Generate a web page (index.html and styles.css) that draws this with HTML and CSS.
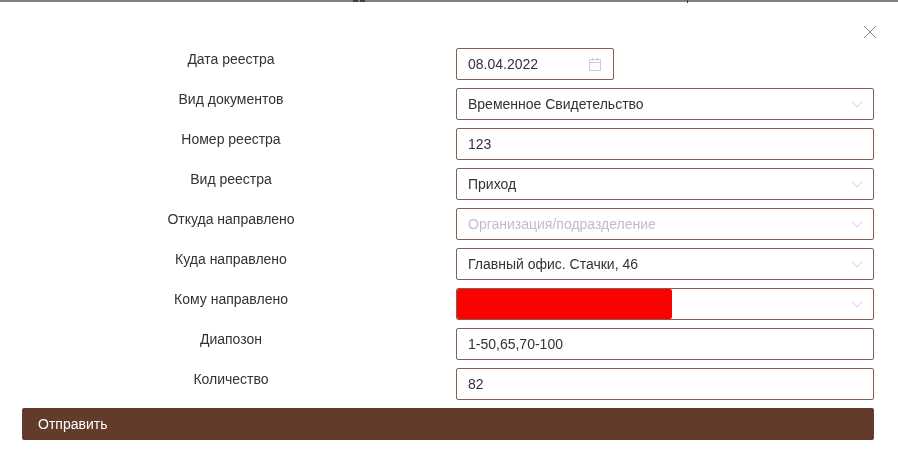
FILE: index.html
```html
<!DOCTYPE html>
<html>
<head>
  <title>Реестр</title>
  <meta name="viewport" content="width=device-width, initial-scale=1">
  <link rel="stylesheet" href="styles.css">
</head>
<body>

  <div class="top-line">
    <span class="mark mark-one"></span>
    <span class="mark mark-two"></span>
    <span class="mark mark-three"></span>
  </div>

  <div class="modal">
    <button class="close-button">
      <svg width="14" height="14" viewBox="0 0 14 14">
        <path d="M1 1L13 13M13 1L1 13" stroke="#8c8c8c" stroke-width="1" fill="none"/>
      </svg>
    </button>

    <form class="form">
      <div class="row">
        <label class="label">Дата реестра</label>
        <div class="field field-date">
          <span class="value">08.04.2022</span>
          <svg class="icon" width="14" height="14" viewBox="0 0 14 14">
            <path d="M1.5 2.5H12.5V13.5H1.5ZM1.5 5.5H12.5M4.5 1V3.5M9.5 1V3.5" stroke="#cccccc" stroke-width="1" fill="none"/>
          </svg>
        </div>
      </div>

      <div class="row">
        <label class="label">Вид документов</label>
        <div class="field field-select">
          <span class="value">Временное Свидетельство</span>
          <svg class="icon" width="12" height="8" viewBox="0 0 12 8">
            <path d="M1 1.5L6 7L11 1.5" stroke="#cfcfcf" stroke-width="1" fill="none"/>
          </svg>
        </div>
      </div>

      <div class="row">
        <label class="label">Номер реестра</label>
        <div class="field"><span class="value">123</span></div>
      </div>

      <div class="row">
        <label class="label">Вид реестра</label>
        <div class="field field-select">
          <span class="value">Приход</span>
          <svg class="icon" width="12" height="8" viewBox="0 0 12 8">
            <path d="M1 1.5L6 7L11 1.5" stroke="#cfcfcf" stroke-width="1" fill="none"/>
          </svg>
        </div>
      </div>

      <div class="row">
        <label class="label">Откуда направлено</label>
        <div class="field field-select">
          <span class="value placeholder">Организация/подразделение</span>
          <svg class="icon" width="12" height="8" viewBox="0 0 12 8">
            <path d="M1 1.5L6 7L11 1.5" stroke="#cfcfcf" stroke-width="1" fill="none"/>
          </svg>
        </div>
      </div>

      <div class="row">
        <label class="label">Куда направлено</label>
        <div class="field field-select">
          <span class="value">Главный офис. Стачки, 46</span>
          <svg class="icon" width="12" height="8" viewBox="0 0 12 8">
            <path d="M1 1.5L6 7L11 1.5" stroke="#cfcfcf" stroke-width="1" fill="none"/>
          </svg>
        </div>
      </div>

      <div class="row">
        <label class="label">Кому направлено</label>
        <div class="field field-select field-hidden">
          <span class="redacted"></span>
          <svg class="icon" width="12" height="8" viewBox="0 0 12 8">
            <path d="M1 1.5L6 7L11 1.5" stroke="#cfcfcf" stroke-width="1" fill="none"/>
          </svg>
        </div>
      </div>

      <div class="row">
        <label class="label">Диапозон</label>
        <div class="field"><span class="value">1-50,65,70-100</span></div>
      </div>

      <div class="row">
        <label class="label">Количество</label>
        <div class="field"><span class="value">82</span></div>
      </div>

      <button class="submit-button" type="button">Отправить</button>
    </form>
  </div>

</body>
</html>
```

FILE: styles.css
```css
* {
  box-sizing: border-box;
}

body {
  margin: 0;
  background-color: white;
  color: #333333;
  font-family: "Liberation Sans", Arial, sans-serif;
  font-size: 14px;
}

.top-line {
  position: relative;
  height: 2px;
  background-color: #808080;
}

.mark {
  position: absolute;
  top: 0;
  height: 2px;
  background-color: #404040;
}

.mark-one {
  left: 353px;
  width: 5px;
}

.mark-two {
  left: 360px;
  width: 5px;
}

.mark-three {
  left: 687px;
  width: 1px;
  height: 3px;
}

.modal {
  position: relative;
  padding: 46px 24px 26px 22px;
  will-change: transform;
}

.close-button {
  position: absolute;
  top: 23px;
  right: 21px;
  display: flex;
  padding: 0;
  background-color: transparent;
  border: none;
  cursor: pointer;
}

.form {
  display: flex;
  flex-direction: column;
  gap: 8px;
}

.row {
  display: grid;
  grid-template-columns: 418px 418px;
  column-gap: 16px;
}

.label {
  height: 22px;
  line-height: 22px;
  text-align: center;
}

.field {
  display: flex;
  align-items: center;
  justify-content: space-between;
  height: 32px;
  padding: 0 11px;
  background-color: white;
  border: 1px solid #84604f;
  border-radius: 2px;
}

.field-date {
  width: 158px;
}

.field-select {
  padding-right: 10px;
}

.field-hidden {
  padding-left: 0;
}

.placeholder {
  color: #bfbfbf;
}

.redacted {
  width: 215px;
  height: 30px;
  background-color: #ff0000;
  border-radius: 2px;
}

.submit-button {
  height: 32px;
  padding: 0 16px;
  background-color: #623b2a;
  color: white;
  font-family: inherit;
  font-size: 14px;
  text-align: left;
  border: none;
  border-radius: 2px;
  cursor: pointer;
}
```
